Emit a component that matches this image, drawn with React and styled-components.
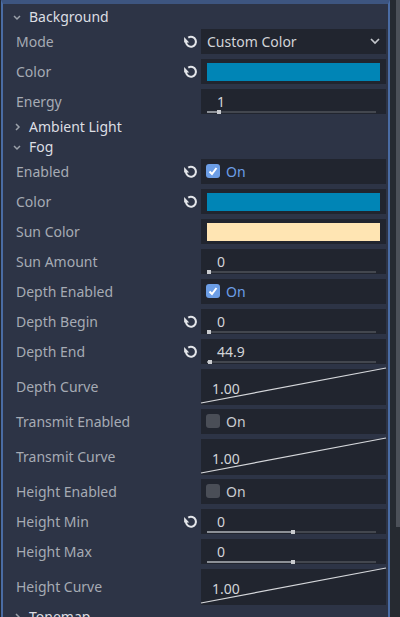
import React from "react";
import styled, { createGlobalStyle } from "styled-components";

const GlobalStyle = createGlobalStyle`
  html, body {
    margin: 0;
    padding: 0;
    background: #22262d;
  }
  body {
    font-family: "Noto Sans", "DejaVu Sans", sans-serif;
    font-size: 14px;
  }
`;

const sections = [
  {
    title: "Background",
    open: true,
    props: [
      { label: "Mode", revert: true, kind: "select", value: "Custom Color" },
      { label: "Color", revert: true, kind: "color", value: "#0085b6" },
      { label: "Energy", kind: "slider", value: "1", pos: 0.06 },
    ],
  },
  { title: "Ambient Light", open: false },
  {
    title: "Fog",
    open: true,
    props: [
      { label: "Enabled", revert: true, kind: "check", checked: true },
      { label: "Color", revert: true, kind: "color", value: "#0085b6" },
      { label: "Sun Color", kind: "color", value: "#ffe5b3" },
      { label: "Sun Amount", kind: "slider", value: "0", pos: 0 },
      { label: "Depth Enabled", kind: "check", checked: true },
      { label: "Depth Begin", revert: true, kind: "slider", value: "0", pos: 0 },
      { label: "Depth End", revert: true, kind: "slider", value: "44.9", pos: 0.006 },
      { label: "Depth Curve", kind: "curve", value: "1.00" },
      { label: "Transmit Enabled", kind: "check", checked: false },
      { label: "Transmit Curve", kind: "curve", value: "1.00" },
      { label: "Height Enabled", kind: "check", checked: false },
      { label: "Height Min", revert: true, kind: "slider", value: "0", pos: 0.51 },
      { label: "Height Max", kind: "slider", value: "0", pos: 0.51 },
      { label: "Height Curve", kind: "curve", value: "1.00" },
    ],
  },
  { title: "Tonemap", open: false },
];

const Frame = styled.div`
  width: 400px;
  height: 617px;
  display: flex;
  overflow: hidden;
  padding-left: 1px;
  box-sizing: border-box;
`;

const Panel = styled.div`
  width: 389px;
  flex-shrink: 0;
  box-sizing: border-box;
  background: #2d3446;
  border-top: 4px solid #3d5580;
  border-left: 2px solid #4a6ca4;
  border-right: 2px solid #4a6ca4;
  padding-top: 3px;
  overflow: hidden;
`;

const ScrollArea = styled.div`
  flex: 1;
  display: flex;
  justify-content: flex-end;
  background: #262a31;
`;

const Grabber = styled.div`
  width: 4px;
  height: 527px;
  background: #4c5058;
`;

const Header = styled.div`
  height: 20px;
  display: flex;
  align-items: center;
  gap: 7px;
  padding-left: 9px;
  padding-bottom: 1px;
  box-sizing: border-box;
  color: #dcdee3;
  font-size: 14px;
`;

const Row = styled.div`
  height: ${({ $tall }) => ($tall ? 40 : 30)}px;
  display: flex;
  align-items: flex-start;
  padding-top: 2px;
  box-sizing: border-box;
`;

const Label = styled.div`
  width: 198px;
  height: 100%;
  box-sizing: border-box;
  padding: 0 3px 3px 13px;
  display: flex;
  align-items: center;
  justify-content: space-between;
  color: #a6abb4;
  white-space: nowrap;
`;

const Field = styled.div`
  width: 185px;
  height: ${({ $tall }) => ($tall ? 36 : 25)}px;
  box-sizing: border-box;
  background: #21252f;
  color: #d2d4d8;
`;

const SelectField = styled(Field)`
  display: flex;
  align-items: center;
  justify-content: space-between;
  padding: 0 6px 1px 6px;
`;

const ColorField = styled(Field)`
  padding: 4px 6px 3px;
`;

const Swatch = styled.div`
  height: 18px;
  background: ${({ $color }) => $color};
`;

const SliderField = styled(Field)`
  padding: 4px 10px 0 6px;
`;

const Value = styled.div`
  line-height: 17px;
  padding-left: 10px;
`;

const Track = styled.div`
  height: 4px;
  display: flex;
  align-items: center;
`;

const TrackFill = styled.div`
  height: 2px;
  background: #8c9097;
`;

const Knob = styled.div`
  width: 4px;
  height: 4px;
  background: #c9cbcf;
  flex-shrink: 0;
`;

const TrackRest = styled.div`
  flex: 1;
  height: 2px;
  background: #43474f;
`;

const CheckField = styled(Field)`
  display: flex;
  align-items: center;
  gap: 6px;
  padding-left: 5px;
  padding-bottom: 1px;
  color: ${({ $on }) => ($on ? "#6c9ee6" : "#c9ccd1")};
`;

const Box = styled.div`
  width: 14px;
  height: 14px;
  border-radius: 3px;
  background: ${({ $on }) => ($on ? "#6c9ee6" : "#4a4e57")};
  display: flex;
  align-items: center;
  justify-content: center;
`;

const CurveField = styled(Field)`
  position: relative;
  display: flex;
  align-items: center;
  padding: 2px 0 0 11px;
`;

const CurveLine = styled.svg`
  position: absolute;
  left: 0;
  top: -1px;
  width: 100%;
  height: calc(100% - 1px);
  overflow: visible;
`;

const Chevron = ({ open }) => (
  <svg width="10" height="10" viewBox="0 0 10 10">
    {open ? (
      <polyline points="2,4 5,7 8,4" fill="none" stroke="#9ba1aa" strokeWidth="1.5" />
    ) : (
      <polyline points="4,2 7,5 4,8" fill="none" stroke="#9ba1aa" strokeWidth="1.5" />
    )}
  </svg>
);

// reset-to-default arrow, drawn the way the editor's reload glyph looks
const RevertIcon = () => (
  <svg width="15" height="15" viewBox="0 0 16 16">
    <path
      d="M3.2 8.2 A5.3 5.3 0 1 0 5.6 3.9"
      fill="none"
      stroke="#e4e6ea"
      strokeWidth="2.2"
    />
    <polygon points="1.2,3.2 1.2,9 6.6,9" fill="#e4e6ea" />
  </svg>
);

const DropArrow = () => (
  <svg width="10" height="8" viewBox="0 0 10 8">
    <polyline points="1,2 5,6 9,2" fill="none" stroke="#c3c6cb" strokeWidth="1.7" />
  </svg>
);

const CheckMark = () => (
  <svg width="10" height="10" viewBox="0 0 10 10">
    <polyline points="1.5,5.5 4,8 8.5,2" fill="none" stroke="#ffffff" strokeWidth="2" />
  </svg>
);

const Editor = ({ prop }) => {
  switch (prop.kind) {
    case "select":
      return (
        <SelectField>
          <span>{prop.value}</span>
          <DropArrow />
        </SelectField>
      );
    case "color":
      return (
        <ColorField>
          <Swatch $color={prop.value} />
        </ColorField>
      );
    case "slider":
      return (
        <SliderField>
          <Value>{prop.value}</Value>
          <Track>
            <TrackFill style={{ width: `${prop.pos * 165}px` }} />
            <Knob />
            <TrackRest />
          </Track>
        </SliderField>
      );
    case "check":
      return (
        <CheckField $on={prop.checked}>
          <Box $on={prop.checked}>{prop.checked && <CheckMark />}</Box>
          <span>On</span>
        </CheckField>
      );
    case "curve":
      return (
        <CurveField $tall>
          <CurveLine viewBox="0 0 100 100" preserveAspectRatio="none">
            <line
              x1="0"
              y1="100"
              x2="100"
              y2="0"
              stroke="#d5d7db"
              strokeWidth="1.2"
              vectorEffect="non-scaling-stroke"
            />
          </CurveLine>
          <span>{prop.value}</span>
        </CurveField>
      );
    default:
      return null;
  }
};

export default function App() {
  return (
    <>
      <GlobalStyle />
      <Frame>
        <Panel>
          {sections.map((section) => (
            <div key={section.title}>
              <Header>
                <Chevron open={section.open} />
                <span>{section.title}</span>
              </Header>
              {section.open &&
                section.props.map((prop) => (
                  <Row key={prop.label} $tall={prop.kind === "curve"}>
                    <Label>
                      <span>{prop.label}</span>
                      {prop.revert && <RevertIcon />}
                    </Label>
                    <Editor prop={prop} />
                  </Row>
                ))}
            </div>
          ))}
        </Panel>
        <ScrollArea>
          <Grabber />
        </ScrollArea>
      </Frame>
    </>
  );
}
